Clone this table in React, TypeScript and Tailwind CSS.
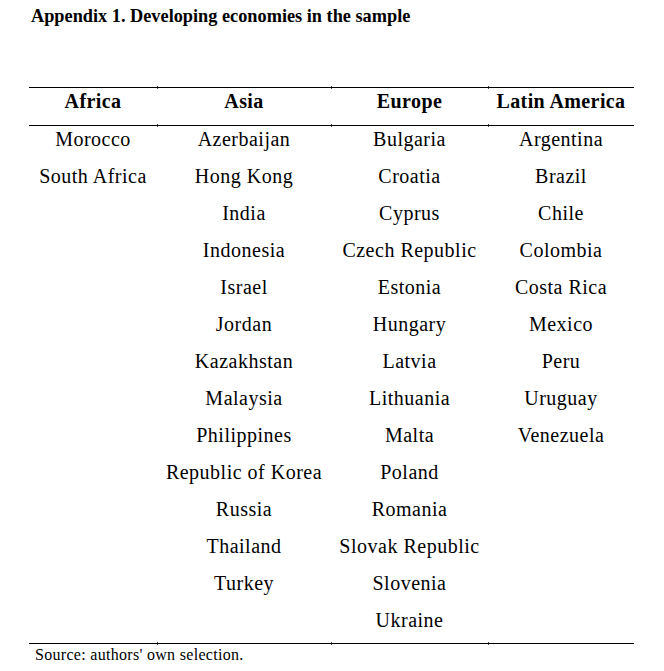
import React from 'react';

const columns = [
  { title: 'Africa', width: 'w-[128px]', items: ['Morocco', 'South Africa'] },
  {
    title: 'Asia',
    width: 'w-[174px]',
    items: [
      'Azerbaijan',
      'Hong Kong',
      'India',
      'Indonesia',
      'Israel',
      'Jordan',
      'Kazakhstan',
      'Malaysia',
      'Philippines',
      'Republic of Korea',
      'Russia',
      'Thailand',
      'Turkey',
    ],
  },
  {
    title: 'Europe',
    width: 'w-[157px]',
    items: [
      'Bulgaria',
      'Croatia',
      'Cyprus',
      'Czech Republic',
      'Estonia',
      'Hungary',
      'Latvia',
      'Lithuania',
      'Malta',
      'Poland',
      'Romania',
      'Slovak Republic',
      'Slovenia',
      'Ukraine',
    ],
  },
  {
    title: 'Latin America',
    width: 'w-[146px]',
    items: ['Argentina', 'Brazil', 'Chile', 'Colombia', 'Costa Rica', 'Mexico', 'Peru', 'Uruguay', 'Venezuela'],
  },
];

// little cell-edge marks where the rules meet the column boundaries
const Ticks = ({ top }: { top: string }) => (
  <>
    <span className={`absolute ${top} left-[128px] w-px h-[3px] bg-black/70`} />
    <span className={`absolute ${top} left-[302px] w-px h-[3px] bg-black/70`} />
    <span className={`absolute ${top} left-[459px] w-px h-[3px] bg-black/70`} />
  </>
);

export default function App() {
  return (
    <div className="w-[664px] h-[671px] bg-white text-black [font-family:'Liberation_Serif','Times_New_Roman',serif] overflow-hidden">
      <h1 className="pt-[4px] pl-[31px] text-[18.3px] leading-[24px] font-bold">
        Appendix 1. Developing economies in the sample
      </h1>

      <div className="relative mt-[59px] ml-[29px] w-[605px]">
        {/* header row */}
        <div className="flex border-t border-b border-black pt-[1px] pb-[12px]">
          {columns.map(col => (
            <div key={col.title} className={`${col.width} text-center text-[20px] leading-[24px] font-bold tracking-[0.4px]`}>
              {col.title}
            </div>
          ))}
        </div>

        {/* body */}
        <div className="flex border-b border-black pt-[1px] pb-[11px] h-[518px]">
          {columns.map(col => (
            <div key={col.title} className={`${col.width} flex flex-col gap-[13px] text-center text-[20px] leading-[24px] tracking-[0.5px]`}>
              {col.items.map(item => (
                <div key={item} className="whitespace-nowrap">{item}</div>
              ))}
            </div>
          ))}
        </div>

        <Ticks top="top-[-1px]" />
        <Ticks top="top-[37px]" />
        <Ticks top="top-[555px]" />
      </div>

      <p className="pl-[35px] pt-[1px] text-[16px] leading-[20px] tracking-[0.3px]">
        Source: authors' own selection.
      </p>
    </div>
  );
}
